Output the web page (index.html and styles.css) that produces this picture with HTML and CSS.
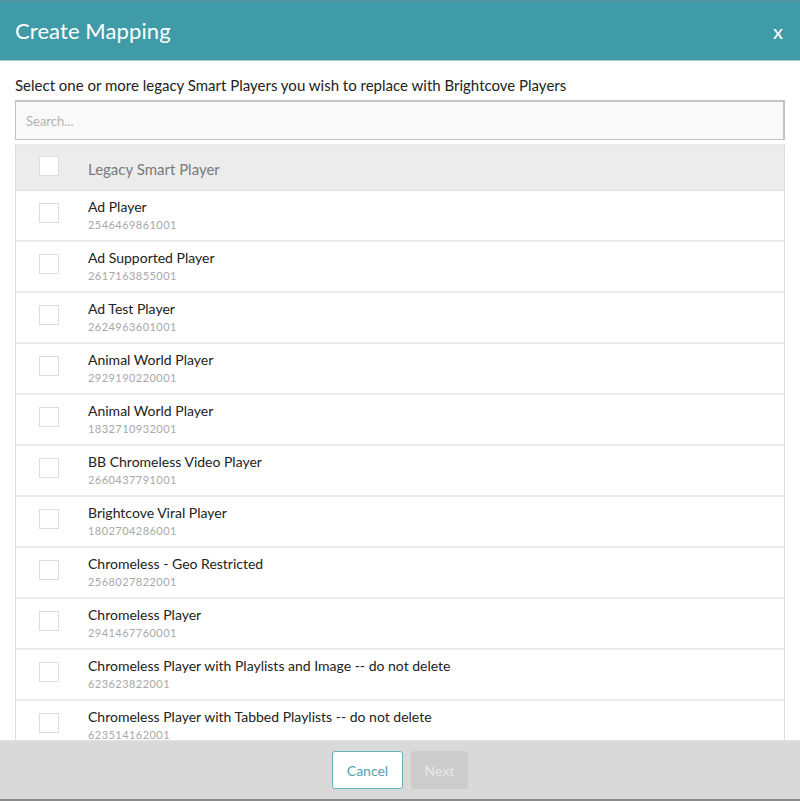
FILE: index.html
```html
<!DOCTYPE html>
<html>
<head>
<meta charset="utf-8">
<link rel="stylesheet" href="styles.css">
</head>
<body>
<div class="modal">
  <div class="modal-header">
    <h1 class="title">Create Mapping</h1>
    <span class="close">x</span>
  </div>
  <div class="modal-body">
    <p class="intro">Select one or more legacy Smart Players you wish to replace with Brightcove Players</p>
    <div class="search">Search...</div>
    <div class="table">
      <div class="row head">
        <span class="check"></span>
        <span class="head-label">Legacy Smart Player</span>
      </div>
      <div class="row"><span class="check"></span><div class="cell"><div class="name">Ad Player</div><div class="pid">2546469861001</div></div></div>
      <div class="row"><span class="check"></span><div class="cell"><div class="name">Ad Supported Player</div><div class="pid">2617163855001</div></div></div>
      <div class="row"><span class="check"></span><div class="cell"><div class="name">Ad Test Player</div><div class="pid">2624963601001</div></div></div>
      <div class="row"><span class="check"></span><div class="cell"><div class="name">Animal World Player</div><div class="pid">2929190220001</div></div></div>
      <div class="row"><span class="check"></span><div class="cell"><div class="name">Animal World Player</div><div class="pid">1832710932001</div></div></div>
      <div class="row"><span class="check"></span><div class="cell"><div class="name">BB Chromeless Video Player</div><div class="pid">2660437791001</div></div></div>
      <div class="row"><span class="check"></span><div class="cell"><div class="name">Brightcove Viral Player</div><div class="pid">1802704286001</div></div></div>
      <div class="row"><span class="check"></span><div class="cell"><div class="name">Chromeless - Geo Restricted</div><div class="pid">2568027822001</div></div></div>
      <div class="row"><span class="check"></span><div class="cell"><div class="name">Chromeless Player</div><div class="pid">2941467760001</div></div></div>
      <div class="row"><span class="check"></span><div class="cell"><div class="name">Chromeless Player with Playlists and Image -- do not delete</div><div class="pid">623623822001</div></div></div>
      <div class="row"><span class="check"></span><div class="cell"><div class="name">Chromeless Player with Tabbed Playlists -- do not delete</div><div class="pid">623514162001</div></div></div>
    </div>
  </div>
  <div class="modal-footer">
    <button class="btn cancel">Cancel</button>
    <button class="btn next" disabled>Next</button>
  </div>
</div>
</body>
</html>
```

FILE: styles.css
```css
* { box-sizing: border-box; }
html, body { margin: 0; padding: 0; }
body {
  font-family: "Lato", "Noto Sans", sans-serif;
  color: #222;
  background: #fff;
}
.modal {
  width: 800px;
  height: 801px;
  display: flex;
  flex-direction: column;
  overflow: hidden;
}
.modal-header {
  height: 61px;
  flex: none;
  background: #409ba9;
  border-top: 1px solid #5f8e96;
  border-bottom: 1px solid #a3d0d6;
  display: flex;
  align-items: center;
  justify-content: space-between;
  padding: 0 15px 0 15px;
}
.title {
  margin: 0;
  font-size: 22px;
  font-weight: 400;
  color: #fff;
  letter-spacing: 0.1px;
}
.close {
  color: #fff;
  font-size: 20px;
  line-height: 1;
  margin-right: 2px;
}
.modal-body {
  flex: 1;
  min-height: 0;
  overflow: hidden;
  padding: 0 15px;
  display: flex;
  flex-direction: column;
}
.intro {
  margin: 0;
  height: 39px;
  flex: none;
  padding-top: 15px;
  font-size: 15px;
  line-height: 18px;
  color: #222;
}
.search {
  height: 40px;
  flex: none;
  background: #f9f9f9;
  border: 1px solid #c4c4c4;
  border-top-width: 2px;
  border-right-width: 2px;
  padding: 0 10px;
  display: flex;
  align-items: center;
  font-size: 13px;
  color: #b3b3b3;
}
.table {
  margin-top: 4px;
  border-left: 1px solid #dcdcdc;
  border-right: 1px solid #dcdcdc;
  border-top: 1px solid #e8e8e8;
}
.row {
  height: 51px;
  display: flex;
  align-items: flex-start;
  border-bottom: 2px solid #ececec;
  padding-left: 23px;
}
.row.head {
  height: 46px;
  background: #ececec;
  border-bottom: 1px solid #e4e4e4;
  align-items: center;
}
.check {
  width: 20px;
  height: 20px;
  flex: none;
  background: #fff;
  border: 1px solid #dddddd;
  margin-top: 12px;
}
.row.head .check { margin-top: -3px; }
.head-label {
  margin-left: 29px;
  font-size: 15px;
  color: #7a7a7a;
  padding-top: 2px;
}
.cell {
  margin-left: 29px;
  padding-top: 7px;
}
.name {
  font-size: 14px;
  line-height: 18px;
  color: #222;
}
.pid {
  font-size: 11px;
  line-height: 14px;
  margin-top: 2px;
  color: #a8a8a8;
  letter-spacing: 0.45px;
}
.modal-footer {
  height: 61px;
  flex: none;
  background: #d9d9d9;
  border-top: 1px solid #e2e2e2;
  border-bottom: 2px solid #8c8c8c;
  display: flex;
  justify-content: center;
  align-items: flex-start;
  gap: 8px;
  padding-top: 10px;
}
.btn {
  height: 38px;
  font-family: inherit;
  font-size: 14px;
  border-radius: 3px;
  padding: 0;
}
.cancel {
  width: 71px;
  background: #fff;
  border: 1px solid #66b2bb;
  color: #4fa4ae;
}
.next {
  width: 57px;
  background: #cccccc;
  border: 1px solid #cccccc;
  color: #e9e9e9;
}
```
